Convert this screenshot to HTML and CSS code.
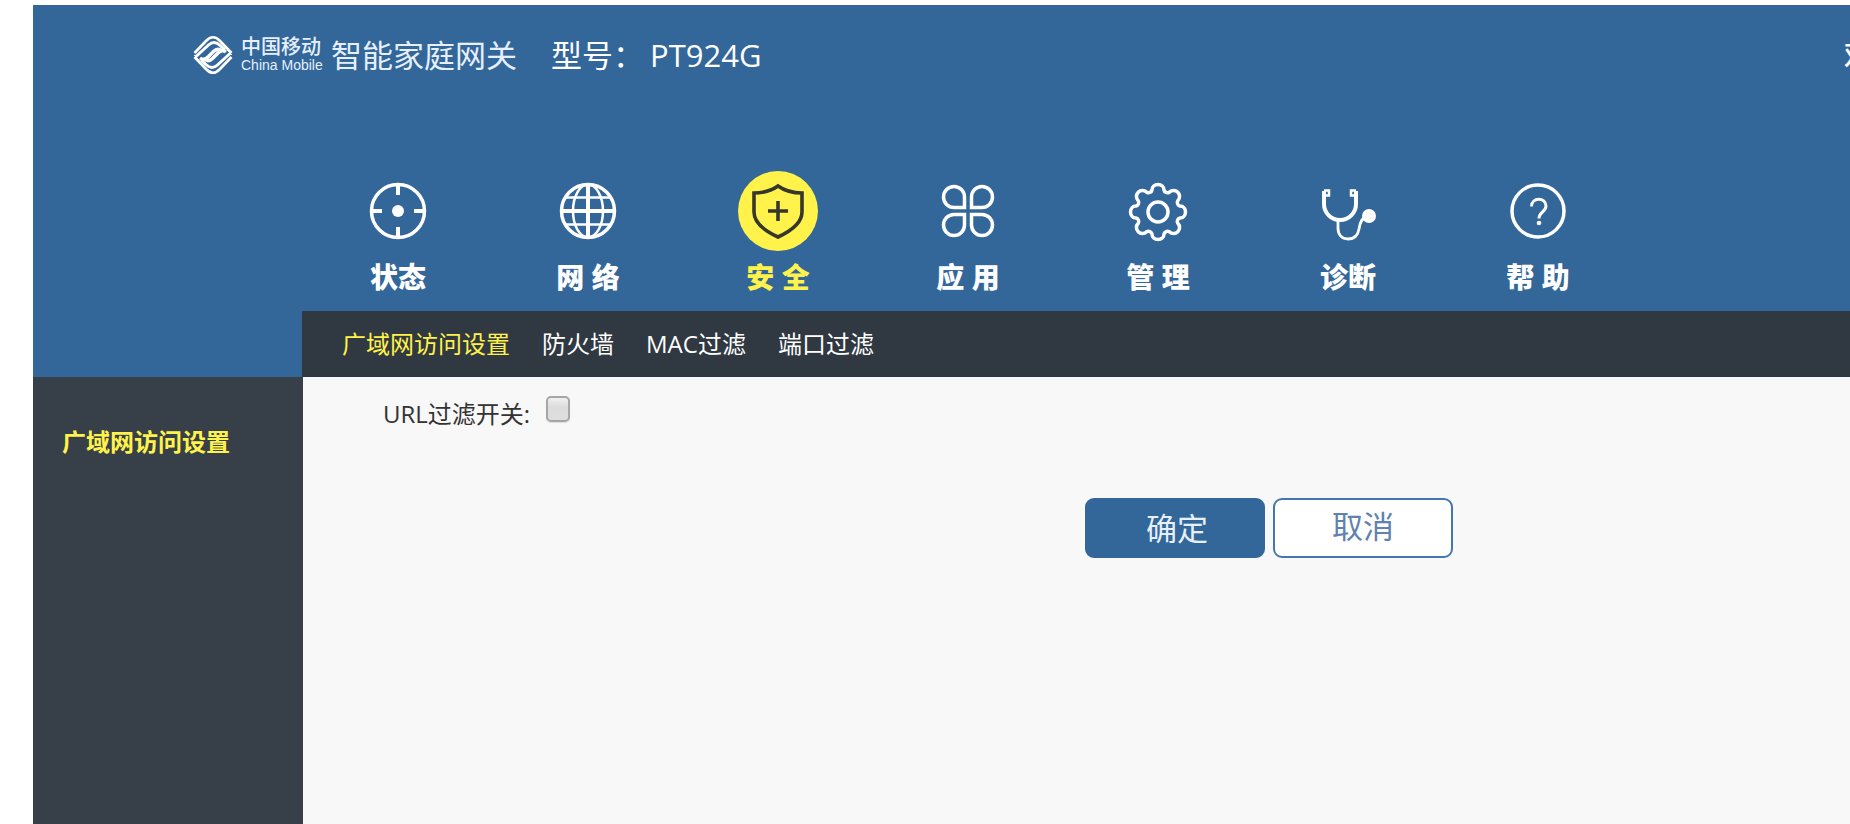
FILE: index.html
```html
<!DOCTYPE html>
<html lang="zh-CN">
<head>
<meta charset="utf-8">
<title>智能家庭网关</title>
<link rel="stylesheet" href="styles.css">
</head>
<body>
<div class="page">
  <header class="header">
    <div class="brand">
      <svg class="brand-logo" viewBox="0 0 40 40" aria-hidden="true">
        <g fill="none" stroke="#fff" stroke-width="2.700">
          <path d="M1.500 18 13 6Q20-1.500 27 6L38.500 18"/>
          <path d="M2.500 22 15.500 10Q21 5 26.500 10L32 15" stroke-width="3"/>
          <path d="M7 23Q11 26 15 22L20.500 16.500Q24.500 12.500 29 16" stroke-width="3.400"/>
          <path d="M33 17Q29 14 25 18L19.500 23.500Q15.500 27.500 11 24" stroke-width="3.400"/>
          <path d="M37.500 18 24.500 30Q19 35 13.500 30L8 25" stroke-width="3"/>
          <path d="M38.500 22 27 34Q20 41.500 13 34L1.500 22"/>
          <path d="M32 11 38 17M34 15 39 20M8 29 2 23M6 25 1 20" stroke-width="1"/>
        </g>
      </svg>
      <div class="brand-name">
        <span class="brand-cn">中国移动</span>
        <span class="brand-en">China Mobile</span>
      </div>
      <span class="brand-product">智能家庭网关</span>
    </div>
    <p class="model"><span>型号：</span><span>PT924G</span></p>
    <p class="welcome">欢迎</p>
  </header>

  <nav class="main-nav">
    <a class="nav-item" href="#">
      <svg class="nav-icon" viewBox="-40 -40 80 80" aria-hidden="true">
        <g fill="none" stroke="#fff" stroke-width="3.500"><circle r="26.500"/><path d="M0-26v10M0 26V16M-26 0h10M26 0H16" stroke-width="4"/></g>
        <circle r="6" fill="#fff"/>
      </svg>
      <span>状态</span>
    </a>
    <a class="nav-item" href="#">
      <svg class="nav-icon" viewBox="-40 -40 80 80" aria-hidden="true">
        <g fill="none" stroke="#fff" stroke-width="2.500"><circle r="26.500" stroke-width="3.500"/><ellipse rx="15" ry="26.500"/><path d="M-23-13.500h46M-23 13.500h46"/><path d="M0-26v52M-26 0h52" stroke-width="4"/></g>
      </svg>
      <span>网 络</span>
    </a>
    <a class="nav-item active" href="#">
      <svg class="nav-icon" viewBox="-40 -40 80 80" aria-hidden="true">
        <circle r="40" fill="#fff24a"/>
        <path d="M0-25C-7-20-14-18-24-18V1C-24 12-13 20 0 26 13 20 24 12 24 1V-18C14-18 7-20 0-25ZM0-10V10M-10 0H10" fill="none" stroke="#36362c" stroke-width="3.600"/>
      </svg>
      <span>安 全</span>
    </a>
    <a class="nav-item" href="#">
      <svg class="nav-icon" viewBox="-40 -40 80 80" aria-hidden="true">
        <g fill="none" stroke="#fff" stroke-width="3.500">
          <path d="M-3.500-3.500H-14A10.500 10.500 0 1 1-3.500-14Z"/>
          <path d="M3.500-3.500H14A10.500 10.500 0 1 0 3.500-14Z"/>
          <path d="M-3.500 3.500H-14A10.500 10.500 0 1 0-3.500 14Z"/>
          <path d="M3.500 3.500H14A10.500 10.500 0 1 1 3.500 14Z"/>
        </g>
      </svg>
      <span>应 用</span>
    </a>
    <a class="nav-item" href="#">
      <svg class="nav-icon" viewBox="-40 -41 80 80" aria-hidden="true">
        <g fill="none" stroke="#fff" stroke-width="3.500" stroke-linejoin="round">
          <circle r="10"/>
          <path d="M-6-22A6 5.500 0 0 1 6-22A3.500 3.500 0 0 0 11.300-19.800A6 6 0 0 1 19.800-11.300A3.500 3.500 0 0 0 22-6A5.500 6 0 0 1 22 6A3.500 3.500 0 0 0 19.800 11.300A6 6 0 0 1 11.300 19.800A3.500 3.500 0 0 0 6 22A6 5.500 0 0 1-6 22A3.500 3.500 0 0 0-11.300 19.800A6 6 0 0 1-19.800 11.300A3.500 3.500 0 0 0-22 6A5.500 6 0 0 1-22-6A3.500 3.500 0 0 0-19.800-11.300A6 6 0 0 1-11.300-19.800A3.500 3.500 0 0 0-6-22Z"/>
        </g>
      </svg>
      <span>管 理</span>
    </a>
    <a class="nav-item" href="#">
      <svg class="nav-icon" viewBox="-40 -40 80 80" aria-hidden="true">
        <g fill="none" stroke="#fff">
          <path d="M-24-20V-7A16 16 0 0 0 8-7V-20" stroke-width="4"/>
          <path d="M-24-20.500H-19V-15.500H-24M8-20.500H3V-15.500H8" stroke-width="2.500"/>
          <path d="M-10 9V17C-10 24-6 28 0 28 7 28 10 24 11 18 12 11 14 6 20 5" stroke-width="2.800"/>
        </g>
        <circle cx="21" cy="5" r="7" fill="#fff"/>
      </svg>
      <span>诊断</span>
    </a>
    <a class="nav-item" href="#">
      <svg class="nav-icon" viewBox="-40 -40 80 80" aria-hidden="true">
        <circle r="26" fill="none" stroke="#fff" stroke-width="3.500"/>
        <path d="M-6.500-4.500C-6.500-14 8-14 8-5 8 1 1 1 1 7.500" fill="none" stroke="#fff" stroke-width="3"/>
        <circle cx="1" cy="12" r="2.300" fill="#fff"/>
      </svg>
      <span>帮 助</span>
    </a>
  </nav>

  <nav class="sub-nav">
    <a class="active" href="#">广域网访问设置</a>
    <a href="#">防火墙</a>
    <a href="#">MAC过滤</a>
    <a href="#">端口过滤</a>
  </nav>

  <div class="body">
    <aside class="sidebar"><a href="#">广域网访问设置</a></aside>
    <main class="content">
      <form>
        <div class="field">
          <label for="url-filter">URL过滤开关:</label>
          <input id="url-filter" type="checkbox">
        </div>
        <div class="actions">
          <button class="button primary" type="submit">确定</button>
          <button class="button" type="reset">取消</button>
        </div>
      </form>
    </main>
  </div>
</div>
</body>
</html>
```
FILE: styles.css
```css
* {
  box-sizing: border-box;
}

body {
  margin: 0;
  background: #fff;
  font-family: "Open Sans", "Noto Sans CJK SC", sans-serif;
  font-size: 24px;
}

a {
  color: inherit;
  text-decoration: none;
}

p {
  margin: 0;
}

.page {
  display: flex;
  flex-direction: column;
  min-height: 100vh;
  padding: 5px 0 0 33px;
  background: linear-gradient(#fff, #fff) 0 0 / 100% 5px no-repeat, linear-gradient(90deg, #fff 33px, #336699 33px);
}

.header {
  display: flex;
  align-items: center;
  height: 100px;
  padding-left: 160px;
  color: #fff;
  white-space: nowrap;
}

.brand {
  display: flex;
  align-items: center;
  color: #e6f0fc;
}

.brand-logo {
  width: 40px;
  height: 40px;
  margin-right: 8px;
}

.brand-name {
  display: flex;
  flex-direction: column;
  width: 80px;
  margin-right: 10px;
}

.brand-cn {
  font-size: 20px;
  font-weight: 500;
  line-height: 20px;
}

.brand-en {
  font-family: "Liberation Sans", Arial, sans-serif;
  font-size: 14px;
  line-height: 16px;
}

.brand-product {
  font-size: 31px;
  line-height: 40px;
}

.model {
  display: flex;
  gap: 6px;
  margin-left: 34px;
  font-size: 31px;
  line-height: 40px;
}

.welcome {
  width: 6px;
  margin-left: auto;
  overflow: hidden;
  font-size: 30px;
  font-weight: 500;
  line-height: 40px;
}

.main-nav {
  display: flex;
  height: 206px;
  padding: 66px 0 0 270px;
}

.nav-item {
  display: flex;
  flex: 0 1 190px;
  flex-direction: column;
  align-items: center;
  gap: 8px;
  color: #fff;
  font-size: 28px;
  font-weight: 900;
  line-height: 36px;
  white-space: nowrap;
}

.nav-icon {
  width: 80px;
  height: 80px;
}

.nav-item.active,
.sub-nav .active {
  color: #fff24a;
}

.sub-nav {
  display: flex;
  align-items: center;
  gap: 32px;
  height: 66px;
  margin-left: 269px;
  padding: 0 0 4px 40px;
  background: #303841;
  color: #fff;
  white-space: nowrap;
}

.body {
  display: flex;
  flex: 1;
}

.sidebar {
  flex: 0 0 270px;
  padding: 47px 29px;
  background: #373f48;
  color: #fff24a;
  font-weight: 700;
  line-height: 36px;
}

.content {
  flex: 1;
  padding-top: 15px;
  background: #f8f8f8;
  color: #333;
}

.field {
  display: flex;
  gap: 16px;
  padding-left: 80px;
  line-height: 44px;
}

.field input {
  width: 24px;
  height: 26px;
  margin: 4px 0 0;
  appearance: none;
  border: 2px solid #a6a6a6;
  border-radius: 5px;
  background: linear-gradient(#f0f0f0, #dcdcdc 40%, #dedede);
  box-shadow: 0 1px 1px #ddd;
}

.actions {
  display: flex;
  gap: 8px;
  padding: 62px 0 0 782px;
}

.button {
  width: 180px;
  height: 60px;
  padding: 0 0 6px;
  border: 2px solid #4577ad;
  border-radius: 9px;
  background: #fff;
  color: #5f82ae;
  font-family: "Noto Sans CJK SC", sans-serif;
  font-size: 31px;
  line-height: 40px;
}

.button.primary {
  padding: 0 0 2px 4px;
  border-color: #336699;
  background: #336699;
  color: #e6f0fc;
}
```
